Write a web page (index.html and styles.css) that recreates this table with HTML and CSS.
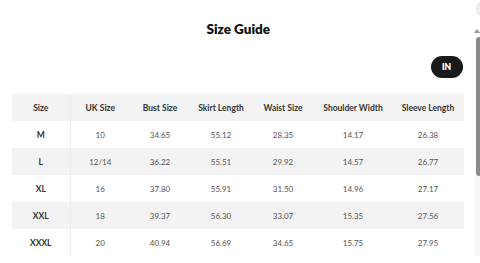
FILE: index.html
```html
<!DOCTYPE html>
<html lang="en">
<head>
    <meta charset="UTF-8">
    <meta name="viewport" content="width=device-width, initial-scale=1.0">
    <title>Size Guide</title>
    <link rel="stylesheet" href="styles.css">
</head>
<body>
    <div class="modal">
        <div class="sheet">
            <h1 class="title">Size Guide</h1>

            <!-- unit toggle -->
            <div class="unit-row">
                <button class="unit-btn">IN</button>
            </div>

            <table class="size-table">
                <colgroup>
                    <col style="width: 58px">
                    <col style="width: 60px">
                    <col style="width: 60px">
                    <col style="width: 62px">
                    <col style="width: 62px">
                    <col style="width: 78px">
                    <col style="width: 72px">
                </colgroup>
                <thead>
                    <tr>
                        <th>Size</th>
                        <th>UK Size</th>
                        <th>Bust Size</th>
                        <th>Skirt Length</th>
                        <th>Waist Size</th>
                        <th>Shoulder Width</th>
                        <th>Sleeve Length</th>
                    </tr>
                </thead>
                <tbody>
                    <tr>
                        <th>M</th><td>10</td><td>34.65</td><td>55.12</td><td>28.35</td><td>14.17</td><td>26.38</td>
                    </tr>
                    <tr>
                        <th>L</th><td>12/14</td><td>36.22</td><td>55.51</td><td>29.92</td><td>14.57</td><td>26.77</td>
                    </tr>
                    <tr>
                        <th>XL</th><td>16</td><td>37.80</td><td>55.91</td><td>31.50</td><td>14.96</td><td>27.17</td>
                    </tr>
                    <tr>
                        <th>XXL</th><td>18</td><td>39.37</td><td>56.30</td><td>33.07</td><td>15.35</td><td>27.56</td>
                    </tr>
                    <tr>
                        <th>XXXL</th><td>20</td><td>40.94</td><td>56.69</td><td>34.65</td><td>15.75</td><td>27.95</td>
                    </tr>
                </tbody>
            </table>
        </div>

        <!-- modal's own scrollbar -->
        <div class="scrollbar">
            <div class="close-edge"></div>
            <div class="arrow"></div>
            <div class="thumb"></div>
            <div class="track"></div>
        </div>
    </div>
</body>
</html>
```

FILE: styles.css
```css
html, body {
    margin: 0;
    padding: 0;
    background: #fff;
}
body {
    width: 480px;
    height: 263px;
    overflow: hidden;
    font-family: Lato, "Open Sans", sans-serif;
    color: #222;
}
.modal {
    display: flex;
    height: 263px;
}
.sheet {
    flex: 1;
    padding: 0 9px 0 12px;
}
.title {
    margin: 0;
    padding-top: 19px;
    font-size: 13.5px;
    line-height: 20px;
    font-weight: 800;
    text-align: center;
    color: #111;
}
.unit-row {
    display: flex;
    justify-content: flex-end;
    padding: 17px 2px 0 0;
}
.unit-btn {
    width: 32px;
    height: 22px;
    border: none;
    border-radius: 11px;
    background: #1a1a1a;
    color: #fff;
    font-family: Lato, sans-serif;
    font-weight: 800;
    font-size: 8.5px;
    padding: 0;
}
.size-table {
    margin-top: 16px;
    width: 452px;
    table-layout: fixed;
    border-collapse: collapse;
    font-size: 8px;
}
.size-table th,
.size-table td {
    height: 27px;
    padding: 0;
    text-align: center;
    white-space: nowrap;
}
.size-table th {
    font-weight: 700;
    color: #333;
    font-size: 8.5px;
}
.size-table td {
    color: #555;
}
.size-table tr > :first-child {
    border-right: 1px solid #ededed;
}
.size-table thead tr,
.size-table tbody tr:nth-child(even) {
    background: #f3f3f3;
}
.scrollbar {
    width: 7px;
    display: flex;
    flex-direction: column;
    align-items: flex-end;
}
.close-edge {
    width: 5px;
    height: 13px;
    margin-top: 2px;
    border-radius: 4px 0 0 4px;
    background: #eeeeee;
}
.arrow {
    margin-top: 14px;
    width: 0;
    height: 0;
    border-left: 3px solid transparent;
    border-right: 3px solid transparent;
    border-bottom: 4px solid #999;
    align-self: center;
}
.thumb {
    margin-top: 4px;
    width: 5px;
    height: 139px;
    border-radius: 3px 0 0 3px;
    background: #8b8b8b;
}
.track {
    width: 7px;
    height: 80px;
    background: #f7f7f7;
}
```
